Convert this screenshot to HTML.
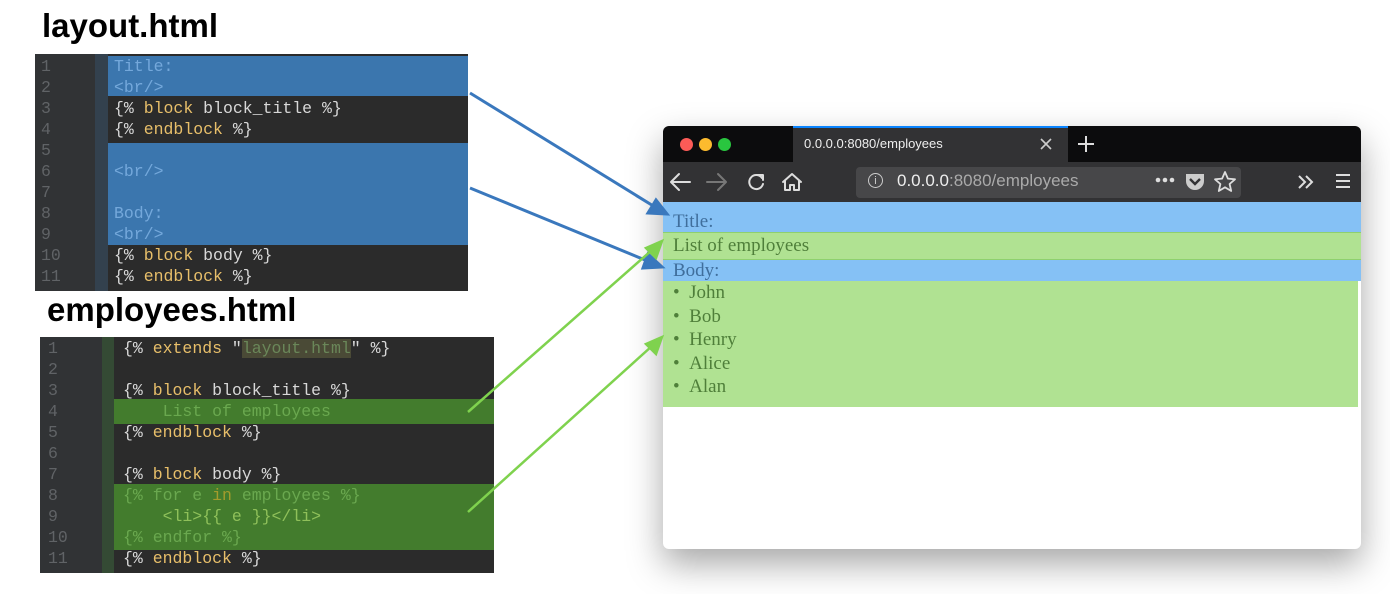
<!DOCTYPE html>
<html><head><meta charset="utf-8"><style>
body{margin:0;width:1390px;height:594px;background:#fff;position:relative;overflow:hidden;font-family:"Liberation Sans",sans-serif}
.abs{position:absolute}
h1{position:absolute;margin:0;font:bold 33px "Liberation Sans",sans-serif;color:#000}
.ed{position:absolute;background:#2b2b2b;font:16.5px/21px "Liberation Mono",monospace;color:#a9b7c6}
.ln{position:absolute;color:#606366;text-align:left}
.row{position:absolute;white-space:pre}
.k{color:#e8bf6a}
.hb{position:absolute;background:#3b76ae}
.hg{position:absolute;background:#437c2d}
.b{color:#74a8db}
.g{color:#6aa84f}
.w{color:#d8d8d8}
</style></head><body>
<h1 style="left:42px;top:7px">layout.html</h1>
<h1 style="left:47px;top:291px">employees.html</h1>

<div class="ed" style="left:35px;top:54px;width:433px;height:237px">
  <div class="abs" style="left:0;top:0;width:60px;height:237px;background:#313335"></div>
  <div class="abs" style="left:60px;top:0;width:13px;height:237px;background:#33414e"></div>
  <div class="hb" style="left:73px;top:2px;width:360px;height:40px"></div>
  <div class="hb" style="left:73px;top:89px;width:360px;height:102px"></div>
  <div class="ln" style="left:6px;top:2px">1<br>2<br>3<br>4<br>5<br>6<br>7<br>8<br>9<br>10<br>11</div>
  <div class="row" style="left:79px;top:2px"><span class="b">Title:</span>
<span class="b">&lt;br/&gt;</span>
<span class="w">{% <span class="k">block</span> block_title %}</span>
<span class="w">{% <span class="k">endblock</span> %}</span>

<span class="b">&lt;br/&gt;</span>

<span class="b">Body:</span>
<span class="b">&lt;br/&gt;</span>
<span class="w">{% <span class="k">block</span> body %}</span>
<span class="w">{% <span class="k">endblock</span> %}</span></div>
</div>

<div class="ed" style="left:40px;top:337px;width:454px;height:236px">
  <div class="abs" style="left:0;top:0;width:62px;height:236px;background:#313335"></div>
  <div class="abs" style="left:62px;top:0;width:12px;height:236px;background:#344a34"></div>
  <div class="hg" style="left:74px;top:62px;width:380px;height:25px"></div>
  <div class="hg" style="left:74px;top:147px;width:380px;height:66px"></div>
  <div class="ln" style="left:8px;top:1px">1<br>2<br>3<br>4<br>5<br>6<br>7<br>8<br>9<br>10<br>11</div>
  <div class="row" style="left:83px;top:1px"><span class="w">{% <span class="k">extends</span> "<span style="background:#4a4a36;color:#6a8759">layout.html</span>" %}</span>

<span class="w">{% <span class="k">block</span> block_title %}</span>
<span class="g">    List of employees</span>
<span class="w">{% <span class="k">endblock</span> %}</span>

<span class="w">{% <span class="k">block</span> body %}</span>
<span class="g">{% for e <span style="color:#a39b2c">in</span> employees %}</span>
<span style="color:#8fc05a">    &lt;li&gt;{{ e }}&lt;/li&gt;</span>
<span class="g">{% endfor %}</span>
<span class="w">{% <span class="k">endblock</span> %}</span></div>
</div>

<!-- browser -->
<div class="abs" style="left:663px;top:126px;width:698px;height:423px;border-radius:6px;background:#fff;box-shadow:0 15px 35px rgba(0,0,0,.35);overflow:hidden">
  <div class="abs" style="left:0;top:0;width:698px;height:36px;background:#0c0c0d"></div>
  <div class="abs" style="left:17px;top:12px;width:13px;height:13px;border-radius:50%;background:#fc5b57"></div>
  <div class="abs" style="left:36px;top:12px;width:13px;height:13px;border-radius:50%;background:#fcbb2e"></div>
  <div class="abs" style="left:55px;top:12px;width:13px;height:13px;border-radius:50%;background:#29c63f"></div>
  <div class="abs" style="left:130px;top:0;width:275px;height:36px;background:#323234;border-top:2px solid #0a84ff;box-sizing:border-box"></div>
  <div class="abs" style="left:141px;top:10px;color:#eee;font-size:13px">0.0.0.0:8080/employees</div>
  <svg class="abs" style="left:377px;top:12px" width="12" height="12"><path d="M1 1L11 11M11 1L1 11" stroke="#ccc" stroke-width="1.6"/></svg>
  <svg class="abs" style="left:414px;top:9px" width="18" height="18"><path d="M9 1V17M1 9H17" stroke="#ddd" stroke-width="2"/></svg>
  <div class="abs" style="left:0;top:36px;width:698px;height:40px;background:#323234"></div>
  <svg class="abs" style="left:0;top:36px" width="150" height="40">
    <g fill="none" stroke-width="2" stroke-linecap="round" stroke-linejoin="round">
      <path d="M9 20H27M16 12L8 20L16 28" stroke="#ddd"/>
      <path d="M44 20H62M55 12L63 20L55 28" stroke="#777"/>
      <path d="M99 16A7 7 0 1 0 100 22" stroke="#ddd"/>
      <path d="M94 13H100V18" stroke="#ddd"/>
      <path d="M120 20L129 12L138 20M122 19V28H127V23H131V28H136V19" stroke="#ddd"/>
    </g>
  </svg>
  <div class="abs" style="left:193px;top:41px;width:385px;height:31px;background:#474749;border-radius:4px"></div>
  <div class="abs" style="left:205px;top:47px;width:15px;height:15px;border:1.5px solid #ccc;border-radius:50%;color:#ccc;font-size:11px;text-align:center;line-height:15px;box-sizing:border-box">i</div>
  <div class="abs" style="left:234px;top:45px;color:#eee;font-size:17px">0.0.0.0<span style="color:#aaa">:8080/employees</span></div>
  <svg class="abs" style="left:492px;top:50px" width="22" height="8"><circle cx="3" cy="4" r="2.3" fill="#ddd"/><circle cx="10" cy="4" r="2.3" fill="#ddd"/><circle cx="17" cy="4" r="2.3" fill="#ddd"/></svg>
  <svg class="abs" style="left:521px;top:46px" width="22" height="20"><path d="M2 2H20V9A9 9 0 0 1 2 9Z" fill="#ccc"/><path d="M6 7L11 12L16 7" stroke="#323234" stroke-width="2.4" fill="none"/></svg>
  <svg class="abs" style="left:550px;top:44px" width="24" height="24"><path d="M12 2L14.9 8.6L22 9.3L16.6 14L18.2 21L12 17.3L5.8 21L7.4 14L2 9.3L9.1 8.6Z" fill="none" stroke="#ddd" stroke-width="1.8" stroke-linejoin="round"/></svg>
  <svg class="abs" style="left:633px;top:48px" width="20" height="16"><path d="M3 2L9 8L3 14M10 2L16 8L10 14" fill="none" stroke="#ddd" stroke-width="2"/></svg>
  <svg class="abs" style="left:672px;top:47px" width="16" height="16"><path d="M1 2H15M1 8H15M1 14H15" stroke="#ddd" stroke-width="2"/></svg>
  <div class="abs" style="left:0;top:76px;width:698px;height:30px;background:#85c1f5"></div>
  <div class="abs" style="left:0;top:106px;width:698px;height:28px;background:#b0e292;border-top:1px solid #8fd06e;border-bottom:1px solid #8fd06e;box-sizing:border-box"></div>
  <div class="abs" style="left:0;top:134px;width:698px;height:21px;background:#85c1f5"></div>
  <div class="abs" style="left:0;top:155px;width:695px;height:126px;background:#b0e292"></div>
  <div class="abs" style="left:10px;top:84px;font:19px/24px 'Liberation Serif',serif;color:#3f6e9c">Title:</div>
  <div class="abs" style="left:10px;top:108px;font:19px/24px 'Liberation Serif',serif;color:#4f7f3a">List of employees</div>
  <div class="abs" style="left:10px;top:133px;font:19px/24px 'Liberation Serif',serif;color:#3f6e9c">Body:</div>
  <div class="abs" style="left:10px;top:155px;font:19px/23.6px 'Liberation Serif',serif;color:#4f7f3a">•&nbsp;&nbsp;John<br>•&nbsp;&nbsp;Bob<br>•&nbsp;&nbsp;Henry<br>•&nbsp;&nbsp;Alice<br>•&nbsp;&nbsp;Alan</div>
</div>

<svg class="abs" style="left:0;top:0" width="1390" height="594">
  <g stroke="#3a78bd" stroke-width="3" fill="#3a78bd">
    <line x1="470" y1="93" x2="655" y2="207"/>
    <polygon points="667,214 648,213 656,200"/>
    <line x1="470" y1="188" x2="650" y2="262"/>
    <polygon points="662,267 643,268 648,254"/>
  </g>
  <g stroke="#7fd24e" stroke-width="2.5" fill="#7fd24e">
    <line x1="468" y1="412" x2="652" y2="250"/>
    <polygon points="662,241 656,258 646,248"/>
    <line x1="468" y1="512" x2="652" y2="346"/>
    <polygon points="662,337 656,354 646,344"/>
  </g>
</svg>
</body></html>
